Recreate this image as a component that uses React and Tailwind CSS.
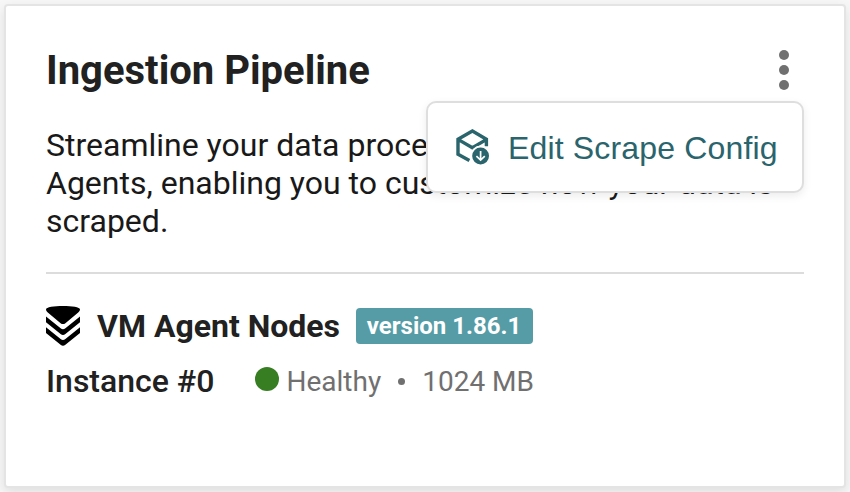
import React from 'react';

function CubeDownIcon() {
  return (
    <svg width="34" height="38" viewBox="0 0 34 38" fill="none" className="block shrink-0">
      <path
        d="M13.4 31.6 L2 25.2 V10.2 L16.4 2 L30.4 10.2 V17.2 M2.4 10.6 L16.4 18.8 L30.2 10.6"
        stroke="#2a646c"
        strokeWidth="3.4"
      />
      <circle cx="24.6" cy="27" r="10.4" fill="#fff" />
      <circle cx="24.6" cy="27" r="8.4" fill="#2a646c" />
      <path d="M24.6 22 V31 M20.4 27.2 L24.6 31.1 L28.8 27.2" stroke="#fff" strokeWidth="1.7" />
    </svg>
  );
}

function AgentLogo() {
  return (
    <svg width="34" height="40" viewBox="0 0 34 40" className="block shrink-0">
      <path d="M0 3.4 C0 1.2 8 0 17 0 S34 1.2 34 3.4 C34 4.6 33.3 5.5 32.2 6.4 L19.4 17.2 Q17 19 14.6 17.2 L1.8 6.4 C.7 5.5 0 4.6 0 3.4Z" />
      <path d="M0 10.5 L14.6 22.3 Q17 24.1 19.4 22.3 L34 10.5 V16.2 L19.4 28 Q17 29.8 14.6 28 L0 16.2Z" />
      <path d="M0 21.2 L14.6 33 Q17 34.8 19.4 33 L34 21.2 V27 L19.4 38.8 Q17 40.6 14.6 38.8 L0 27Z" />
    </svg>
  );
}

export default function App() {
  return (
    <div className="h-[492px] w-[850px] overflow-hidden bg-[#f7f7f7] p-1 font-[Roboto,sans-serif] text-[#212121]">
      <section className="h-[484px] rounded-[4px] border-2 border-[#e4e4e4] bg-white px-10 shadow-[0_4px_12px_rgba(0,0,0,0.1)]">
        <header className="relative flex h-[120px] items-start justify-between pt-10">
          <h1 className="pt-px text-[40px] leading-[48px] font-bold whitespace-nowrap">Ingestion Pipeline</h1>
          <button aria-label="Open menu" className="mt-1 mr-[15px] flex flex-col gap-[5px]">
            <span className="size-[10px] rounded-full bg-[#707070]" />
            <span className="size-[10px] rounded-full bg-[#707070]" />
            <span className="size-[10px] rounded-full bg-[#707070]" />
          </button>
          <div className="absolute top-[95px] right-0 flex h-[92px] w-[378px] items-center rounded-[10px] border-2 border-[#dedede] bg-white pt-0.5 pl-7 font-['Liberation_Sans',Arial,sans-serif] text-[32px] whitespace-nowrap text-[#2a646c] shadow-[0_3px_8px_rgba(0,0,0,0.08)]">
            <CubeDownIcon />
            <span className="ml-[18px] leading-9 tracking-[0.16px]">Edit Scrape Config</span>
          </div>
        </header>
        <p className="h-[146px] text-[32px] leading-[38px] whitespace-nowrap text-[#191919]">
          Streamline your data processing with VM
          <br />
          Agents, enabling you to customize how your data is
          <br />
          scraped.
        </p>
        <div className="h-[2px] bg-[#dcdcdc]" />
        <div className="mt-8 flex h-10 items-center whitespace-nowrap">
          <AgentLogo />
          <h2 className="ml-[17px] text-[32px] leading-10 font-bold">VM Agent Nodes</h2>
          <span className="ml-4 flex h-9 w-[177px] items-center justify-center rounded-[4px] bg-[#559ca6] pr-px text-[24px] leading-9 font-bold text-white">
            version 1.86.1
          </span>
        </div>
        <div className="mt-[15px] flex h-10 items-center whitespace-nowrap">
          <span className="w-[209px] text-[32px] leading-10 font-medium">Instance #0</span>
          <span className="mb-1 size-6 rounded-full bg-[#377e22]" />
          <span className="mt-0.5 ml-[7.5px] text-[28px] leading-10 text-[#707070]">Healthy</span>
          <span className="mx-[17px] size-[7px] rounded-full bg-[#707070]" />
          <span className="mt-0.5 text-[28px] leading-10 text-[#707070]">1024 MB</span>
        </div>
      </section>
    </div>
  );
}
